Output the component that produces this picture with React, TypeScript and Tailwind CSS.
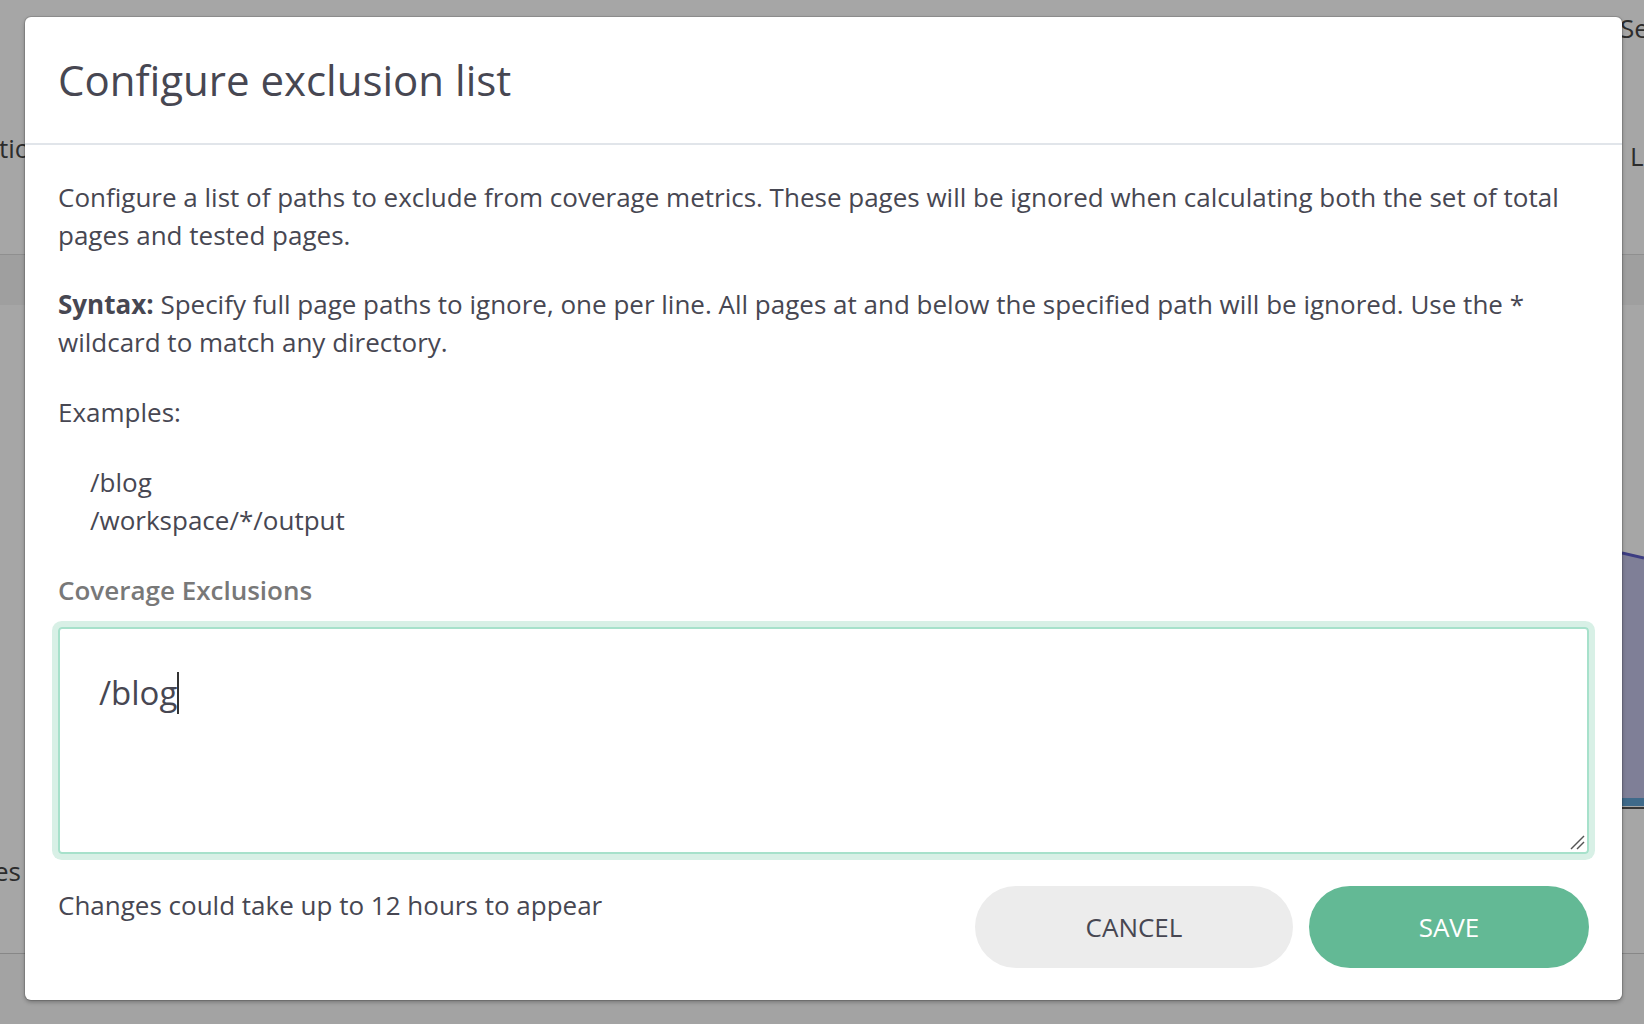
import React from "react";

export default function App() {
  const font = "font-['Open_Sans',_'Noto_Sans',_sans-serif]";
  return (
    <div className={`relative h-[1024px] w-full overflow-hidden bg-white ${font} text-[#474752]`}>
      {/* underlying page */}
      <div className="flex h-full flex-col">
        <div className="flex h-[255px] justify-between border-b border-[#dcdcdc]">
          <div className="w-[25px] overflow-hidden whitespace-nowrap pt-[132px] text-[26px] leading-[32px] text-[#444]">
            <span className="-ml-[1px]">tion</span>
          </div>
          <div className="flex w-[22px] flex-col overflow-hidden whitespace-nowrap text-[26px] leading-[32px] text-[#444]">
            <span className="pt-[12px] -ml-[2px]">Se</span>
            <span className="mt-[96px] ml-[8px]">L</span>
          </div>
        </div>
        <div className="h-[50px] bg-[#f4f4f4]" />
        <div className="flex flex-1 justify-between border-b border-[#cfcfcf]">
          <div className="w-[25px] overflow-hidden whitespace-nowrap pt-[550px] text-[26px] leading-[32px] text-[#444]">
            <span className="-ml-[6px]">es</span>
          </div>
          <div className="w-[22px] pt-[243px]">
            <svg width="22" height="270" viewBox="0 0 22 270">
              <polygon points="0,5 22,10 22,250 0,250" fill="#c4c4e8" />
              <line x1="0" y1="5" x2="22" y2="10" stroke="#5e5ec8" strokeWidth="3" />
              <rect x="0" y="250" width="22" height="8" fill="#62a3d5" />
              <rect x="0" y="259" width="22" height="2" fill="#555" />
            </svg>
          </div>
        </div>
        <div className="h-[70px] bg-[#fafafa]" />
      </div>

      {/* overlay */}
      <div className="absolute inset-0 bg-black/[0.35]" />

      {/* modal */}
      <div className="absolute left-[25px] top-[17px] flex w-[1597px] flex-col rounded-[6px] bg-white shadow-[0_0_0_1px_rgba(0,0,0,0.12),0_2px_4px_rgba(0,0,0,0.3)]">
        <div className="flex h-[128px] items-center border-b-2 border-[#e1e5ea] px-[33px]">
          <h2 className="text-[42px] font-normal leading-[52px] text-[#474752]">Configure exclusion list</h2>
        </div>
        <div className="flex flex-col px-[33px] pb-[32px] pt-[33px] text-[26px] leading-[38px]">
          <p className="mb-[31px]">
            Configure a list of paths to exclude from coverage metrics. These pages will be ignored when calculating both the set of total pages and tested pages.
          </p>
          <p className="mb-[32px]">
            <span className="font-bold">Syntax:</span> Specify full page paths to ignore, one per line. All pages at and below the specified path will be ignored. Use the * wildcard to match any directory.
          </p>
          <p className="mb-[32px]">Examples:</p>
          <div className="mb-[32px] flex flex-col pl-[32px]">
            <span>/blog</span>
            <span>/workspace/*/output</span>
          </div>
          <label className="mb-[18px] font-semibold text-[#787878]">Coverage Exclusions</label>
          <div className="relative h-[227px] rounded-[4px] border-2 border-[#a7e1cb] px-[39px] pt-[34px] text-[33px] leading-[44px] text-[#474752] shadow-[0_0_0_6px_#d8f0e6]">
            <span>/blog</span>
            <span className="inline-block h-[42px] w-[2px] translate-y-[9px] bg-[#333]" />
            <svg className="absolute bottom-[2px] right-[2px]" width="16" height="16" viewBox="0 0 16 16">
              <line x1="2" y1="15" x2="15" y2="2" stroke="#555" strokeWidth="1.5" />
              <line x1="8" y1="15" x2="15" y2="8" stroke="#555" strokeWidth="1.5" />
            </svg>
          </div>
          <div className="mt-[32px] flex items-start justify-between">
            <p className="leading-[38px]">Changes could take up to 12 hours to appear</p>
            <div className="flex gap-[16px]">
              <button className="flex h-[82px] w-[318px] items-center justify-center rounded-full bg-[#ececec] text-[26px] text-[#474752]">
                CANCEL
              </button>
              <button className="flex h-[82px] w-[280px] items-center justify-center rounded-full bg-[#63b995] text-[26px] text-white">
                SAVE
              </button>
            </div>
          </div>
        </div>
      </div>
    </div>
  );
}
